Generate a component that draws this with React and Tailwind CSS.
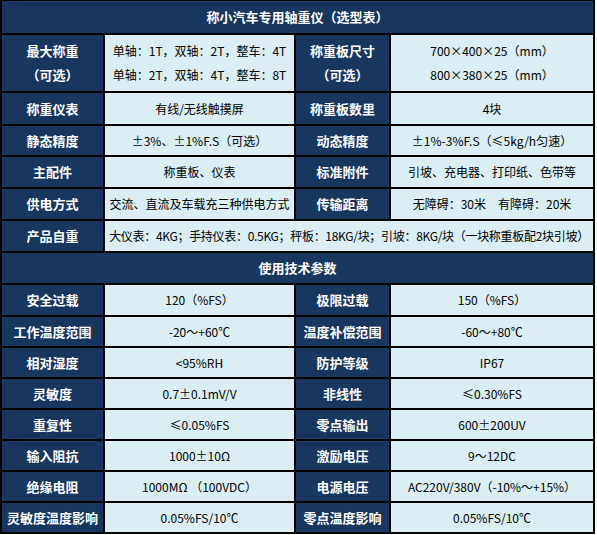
const font = { fontFamily: '"Noto Sans CJK SC", "Noto Sans", sans-serif' };

const topRows = [
  ["称重仪表", "有线/无线触摸屏", "称重板数里", "4块"],
  ["静态精度", "±3%、±1%F.S（可选）", "动态精度", "±1%-3%F.S（≤5kg/h匀速）"],
  ["主配件", "称重板、仪表", "标准附件", "引坡、充电器、打印纸、色带等"],
  ["供电方式", "交流、直流及车载充三种供电方式", "传输距离", "无障碍：30米　有障碍：20米"],
];

const techRows = [
  ["安全过载", "120（%FS）", "极限过载", "150（%FS）"],
  ["工作温度范围", "-20～+60℃", "温度补偿范围", "-60～+80℃"],
  ["相对湿度", "<95%RH", "防护等级", "IP67"],
  ["灵敏度", "0.7±0.1mV/V", "非线性", "≤0.30%FS"],
  ["重复性", "≤0.05%FS", "零点输出", "600±200UV"],
  ["输入阻抗", "1000±10Ω", "激励电压", "9～12DC"],
  ["绝缘电阻", "1000MΩ （100VDC）", "电源电压", "AC220V/380V（-10%～+15%）"],
  ["灵敏度温度影响", "0.05%FS/10℃", "零点温度影响", "0.05%FS/10℃"],
];

function Label({ children }) {
  return (
    <div className="bg-[#17375e] text-white font-bold text-[13px] flex flex-col items-center justify-center leading-6">
      {children}
    </div>
  );
}

function Value({ children, className = "" }) {
  return (
    <div className={`bg-[#daeef3] text-black text-[12px] flex flex-col items-center justify-center leading-6 whitespace-nowrap ${className}`}>
      {children}
    </div>
  );
}

function Row({ row }) {
  return (
    <>
      <Label>{row[0]}</Label>
      <Value>{row[1]}</Value>
      <Label>{row[2]}</Label>
      <Value>{row[3]}</Value>
    </>
  );
}

export default function App() {
  return (
    <div className="w-[597px] h-[535px] bg-white" style={font}>
      <div className="w-[595px] bg-black pt-px px-[2px] pb-[2px] grid gap-[2px] grid-cols-[101px_189px_93px_202px] grid-rows-[32px_56px_31px_29px_30px_30px_30px_30px_30px_29px_29px_29px_29px_29px_29px_29px]">
        <div className="col-span-4 bg-[#17375e] text-white font-bold text-[13px] flex items-center justify-center">
          称小汽车专用轴重仪（选型表）
        </div>

        <Label>
          <span>最大称重</span>
          <span>（可选）</span>
        </Label>
        <Value>
          <span>单轴：1T，双轴：2T，整车：4T</span>
          <span>单轴：2T，双轴：4T，整车：8T</span>
        </Value>
        <Label>
          <span>称重板尺寸</span>
          <span>（可选）</span>
        </Label>
        <Value>
          <span>700×400×25（mm）</span>
          <span>800×380×25（mm）</span>
        </Value>

        {topRows.map((r) => (
          <Row key={r[0]} row={r} />
        ))}

        <Label>产品自重</Label>
        <Value className="col-span-3 tracking-[-0.3px]">
          大仪表：4KG；手持仪表：0.5KG；秤板：18KG/块；引坡：8KG/块（一块称重板配2块引坡）
        </Value>

        <div className="col-span-4 bg-[#17375e] text-white font-bold text-[13px] flex items-center justify-center">
          使用技术参数
        </div>

        {techRows.map((r) => (
          <Row key={r[0]} row={r} />
        ))}
      </div>
    </div>
  );
}
